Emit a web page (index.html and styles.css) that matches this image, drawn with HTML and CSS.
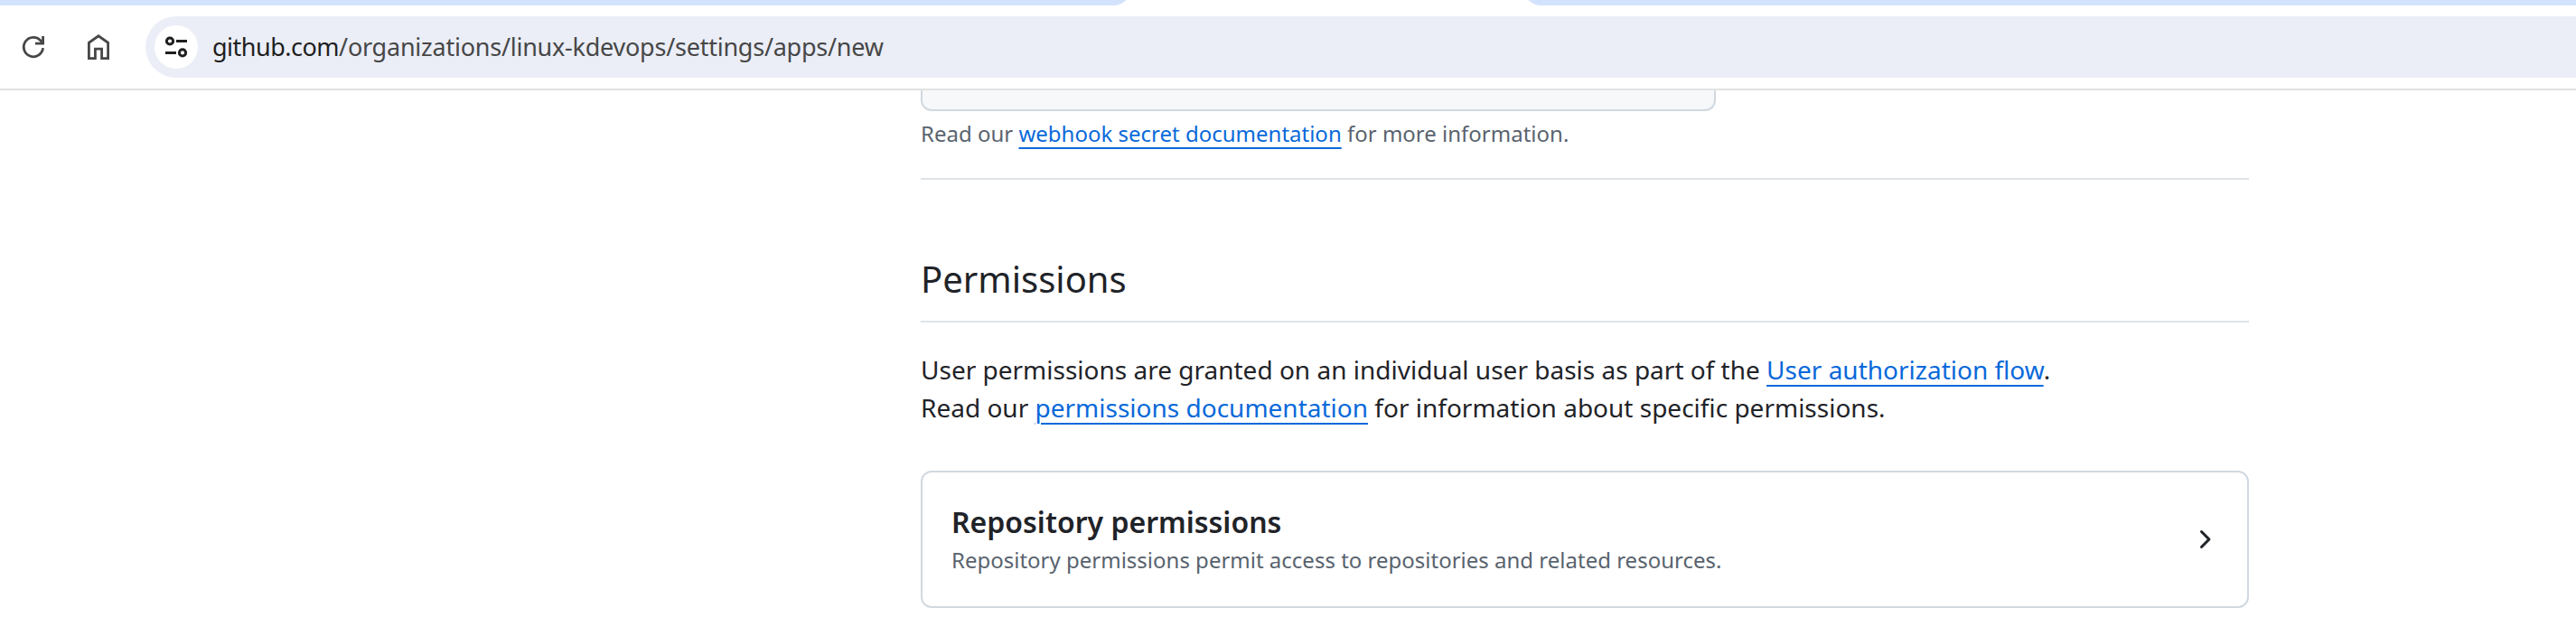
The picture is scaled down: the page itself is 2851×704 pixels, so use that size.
FILE: index.html
```html
<!DOCTYPE html>
<html lang="en">
<head>
<meta charset="utf-8">
<title>Register new GitHub App</title>
<link rel="stylesheet" href="styles.css">
</head>
<body>
<header class="browser">
  <div class="tabstrip">
    <div class="tabs tabs-before"></div>
    <div class="tabs tabs-after"></div>
  </div>
  <div class="toolbar">
    <svg class="icon reload" viewBox="0 0 32 32" fill="none" stroke="#474747" stroke-width="2.8"><path d="M27.6 17.2A10.7 10.7 0 1 1 25.2 9.2L27 12"/><path d="M27.6 4V12.2H19"/></svg>
    <svg class="icon home" viewBox="0 0 32 32" fill="none" stroke="#474747" stroke-width="2.8"><path d="M5.4 28.6V11.3L16 3.8L26.6 11.3V28.6H19.6V18.2H12.4V28.6Z"/></svg>
    <div class="omnibox">
      <span class="site-info"><svg viewBox="0 0 32 32" fill="none" stroke="#1f1f1f" stroke-width="3"><circle cx="9" cy="9.5" r="3.6"/><path d="M16 9.5H28M4 22.4H16"/><circle cx="23" cy="22.4" r="3.6"/></svg></span>
      <span class="url"><span class="host">github.com</span>/organizations/linux-kdevops/settings/apps/new</span>
    </div>
  </div>
</header>
<main class="page">
  <div class="secret-input"></div>
  <p class="note">Read our <a href="#">webhook secret documentation</a> for more information.</p>
  <hr class="divider">
  <h2 class="section-title">Permissions</h2>
  <p class="intro">User permissions are granted on an individual user basis as part of the <a href="#">User authorization flow</a>.<br>Read our <a href="#">permissions documentation</a> for information about specific permissions.</p>
  <section class="card">
    <div class="card-body">
      <h3 class="card-title">Repository permissions</h3>
      <p class="card-text">Repository permissions permit access to repositories and related resources.</p>
    </div>
    <svg class="chevron" viewBox="0 0 16 16" fill="#1f2328"><path d="M6.22 3.22a.75.75 0 0 1 1.06 0l4.25 4.25a.75.75 0 0 1 0 1.06l-4.25 4.25a.75.75 0 0 1-1.06-1.06L9.94 8 6.22 4.28a.75.75 0 0 1 0-1.06Z"/></svg>
  </section>
</main>
</body>
</html>
```
FILE: styles.css
```css
* { box-sizing: border-box; }
body {
  margin: 0;
  height: 704px;
  overflow: hidden;
  background: #fff;
  color: #1f2328;
  font-family: "Noto Sans", sans-serif;
}
h2, h3, p { margin: 0; white-space: nowrap; }
.browser { height: 100px; border-bottom: 2px solid #e1e3e1; }
.tabstrip { display: flex; justify-content: space-between; height: 6px; overflow: hidden; align-items: flex-end; }
.tabs { height: 20px; background: #d3e3fd; flex: none; }
.tabs-before { width: 1252px; border-bottom-right-radius: 20px; }
.tabs-after { width: 1165px; border-bottom-left-radius: 20px; }
.toolbar { display: flex; align-items: center; height: 92px; padding-left: 20px; }
.icon { width: 32px; height: 32px; flex: none; }
.home { margin: 0 36px 0 41px; }
.omnibox {
  display: flex;
  align-items: center;
  flex: 1;
  height: 68px;
  padding-left: 10px;
  background: #ebeef7;
  border-radius: 34px 0 0 34px;
}
.site-info {
  display: flex;
  align-items: center;
  justify-content: center;
  width: 48px;
  height: 48px;
  border-radius: 50%;
  background: #fff;
}
.site-info svg { width: 32px; height: 32px; }
.url { margin-left: 16px; font-size: 27px; letter-spacing: -0.24px; line-height: 40px; color: #474747; white-space: nowrap; }
.host { color: #1f1f1f; letter-spacing: -0.5px; }
.page { width: 1470px; margin-left: 1019px; }
.secret-input {
  width: 880px;
  height: 23px;
  background: #f6f8fa;
  border: 2px solid #d1d9e0;
  border-top: 0;
  border-radius: 0 0 12px 12px;
}
a { color: #0969da; text-decoration: underline; text-decoration-thickness: 2px; text-underline-offset: 6px; }
.note { margin-top: 7px; font-size: 24px; line-height: 36px; color: #59636e; }
.divider { margin: 31px 0 0; border: 0; height: 2px; background: #dfe4e8; }
.section-title {
  margin-top: 80px;
  padding-bottom: 16px;
  border-bottom: 2px solid #dfe4e8;
  font-size: 40px;
  font-weight: 400;
  line-height: 60px;
}
.intro { margin-top: 31px; font-size: 28px; line-height: 42px; }
.card {
  display: flex;
  align-items: center;
  justify-content: space-between;
  height: 152px;
  margin-top: 49px;
  padding: 0 32px;
  border: 2px solid #d1d9e0;
  border-radius: 12px;
}
.card-body { padding-bottom: 2px; }
.card-title { font-size: 32px; font-weight: 600; line-height: 48px; }
.card-text { font-size: 24px; line-height: 36px; color: #59636e; }
.chevron { width: 32px; height: 32px; }
```
